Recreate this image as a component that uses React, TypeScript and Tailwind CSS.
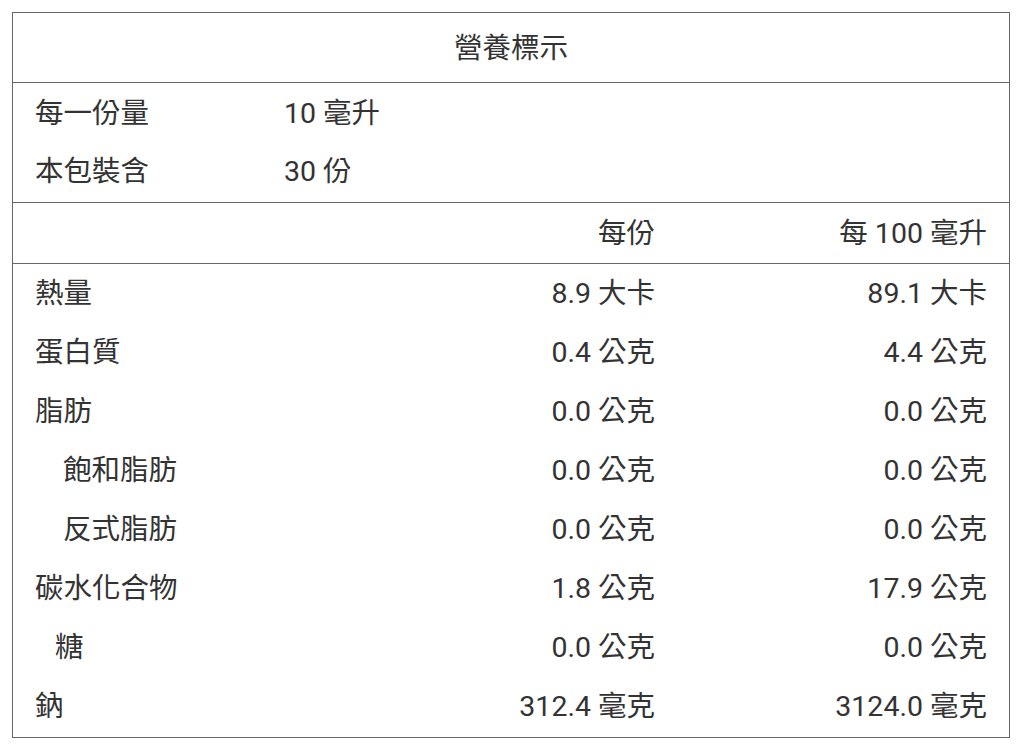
import React from "react";

const rows: { label: string; indent?: string; a: string; b: string }[] = [
  { label: "熱量", a: "8.9 大卡", b: "89.1 大卡" },
  { label: "蛋白質", a: "0.4 公克", b: "4.4 公克" },
  { label: "脂肪", a: "0.0 公克", b: "0.0 公克" },
  { label: "飽和脂肪", indent: "pl-[50px]", a: "0.0 公克", b: "0.0 公克" },
  { label: "反式脂肪", indent: "pl-[50px]", a: "0.0 公克", b: "0.0 公克" },
  { label: "碳水化合物", a: "1.8 公克", b: "17.9 公克" },
  { label: "糖", indent: "pl-[42px]", a: "0.0 公克", b: "0.0 公克" },
  { label: "鈉", a: "312.4 毫克", b: "3124.0 毫克" },
];

export default function App() {
  return (
    <div
      className="min-h-[744px] w-[1024px] bg-white pl-[12px] pt-[12px] text-[28.5px] text-[#333]"
      style={{ fontFamily: "Roboto, 'Noto Sans CJK TC', sans-serif" }}
    >
      <div className="flex w-[998px] flex-col border border-[#666]">
        <div className="flex h-[70px] items-center justify-center border-b border-[#666] pt-[3px]">
          營養標示
        </div>
        <div className="flex flex-col border-b border-[#666] pb-px">
          <div className="flex h-[59px] items-center pl-[22px] pt-[3px]">
            <div className="w-[249px]">每一份量</div>
            <div>10 毫升</div>
          </div>
          <div className="flex h-[59px] items-center pl-[22px] pt-[2px]">
            <div className="w-[249px]">本包裝含</div>
            <div>30 份</div>
          </div>
        </div>
        <div className="grid h-[61px] grid-cols-3 items-center border-b border-[#666] pt-[2px]">
          <div />
          <div className="pr-[22px] text-right">每份</div>
          <div className="pr-[22px] text-right">每 100 毫升</div>
        </div>
        <div className="flex flex-col pb-px">
          {rows.map((r, i) => (
            <div key={i} className="grid h-[59px] grid-cols-3 items-center pt-[2px]">
              <div className={r.indent ?? "pl-[22px]"}>{r.label}</div>
              <div className="pr-[22px] text-right">{r.a}</div>
              <div className="pr-[22px] text-right">{r.b}</div>
            </div>
          ))}
        </div>
      </div>
    </div>
  );
}
